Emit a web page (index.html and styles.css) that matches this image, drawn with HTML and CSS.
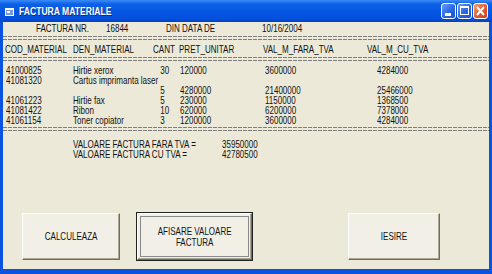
FILE: index.html
```html
<!DOCTYPE html>
<html lang="ro">
<head>
  <meta charset="UTF-8">
  <title>FACTURA MATERIALE</title>
  <link rel="stylesheet" href="styles.css">
</head>
<body>
  <div class="window">
    <div class="titlebar">
      <svg class="app-icon" width="9" height="8" viewBox="0 0 9 8">
        <rect x="0" y="0" width="9" height="8" fill="#fff"/>
        <rect x="1" y="2" width="7" height="5" fill="#7a96df"/>
        <rect x="2" y="3" width="3" height="2" fill="#fff"/>
      </svg>
      <span class="title">FACTURA MATERIALE</span>
      <div class="controls">
        <span class="ctl">
          <svg width="15" height="16" viewBox="0 0 15 16"><rect x="4" y="10" width="6" height="3" fill="#fff"/></svg>
        </span>
        <span class="ctl">
          <svg width="15" height="16" viewBox="0 0 15 16"><rect x="3.5" y="3.5" width="8" height="8" fill="none" stroke="#fff" stroke-width="1"/><rect x="3" y="3" width="9" height="2" fill="#fff"/></svg>
        </span>
        <span class="ctl close">
          <svg width="15" height="16" viewBox="0 0 15 16"><path d="M4 4 L11 12 M11 4 L4 12" stroke="#fff" stroke-width="2"/></svg>
        </span>
      </div>
    </div>

    <div class="client">
      <div class="info-row">
        <span>FACTURA NR.</span>
        <span>16844</span>
        <span>DIN DATA DE</span>
        <span>10/16/2004</span>
      </div>

      <div class="rule"></div>

      <div class="grid head">
        <span>COD_MATERIAL</span>
        <span>DEN_MATERIAL</span>
        <span>CANT</span>
        <span>PRET_UNITAR</span>
        <span>VAL_M_FARA_TVA</span>
        <span>VAL_M_CU_TVA</span>
      </div>

      <div class="rule"></div>

      <div class="grid rows">
        <span>41000825</span><span>Hirtie xerox</span><span class="qty">30</span><span>120000</span><span>3600000</span><span>4284000</span>
        <span>41081320</span><span class="wide">Cartus imprimanta laser</span>
        <span></span><span></span><span class="qty">5</span><span>4280000</span><span>21400000</span><span>25466000</span>
        <span>41061223</span><span>Hirtie fax</span><span class="qty">5</span><span>230000</span><span>1150000</span><span>1368500</span>
        <span>41081422</span><span>Ribon</span><span class="qty">10</span><span>620000</span><span>6200000</span><span>7378000</span>
        <span>41061154</span><span>Toner copiator</span><span class="qty">3</span><span>1200000</span><span>3600000</span><span>4284000</span>
      </div>

      <div class="rule"></div>

      <div class="totals">
        <span>VALOARE FACTURA FARA TVA =</span><span>35950000</span>
        <span>VALOARE FACTURA CU TVA =</span><span>42780500</span>
      </div>

      <div class="actions">
        <button class="btn btn-calc"><b class="label">CALCULEAZA</b></button>
        <button class="btn btn-show focused"><div class="focus-rect"><b class="label">AFISARE VALOARE<br>FACTURA</b></div></button>
        <button class="btn btn-exit"><b class="label">IESIRE</b></button>
      </div>
    </div>
  </div>
</body>
</html>
```

FILE: styles.css
```css
body {
  margin: 0;
  padding: 0;
  background: #fff;
  font-family: "Liberation Sans", Arial, sans-serif;
}

.window {
  width: 492px;
  height: 274px;
  box-sizing: border-box;
  background: #0a52e0;
  display: flex;
  flex-direction: column;
}

/* title bar */
.titlebar {
  height: 22px;
  flex: none;
  display: flex;
  align-items: center;
  padding: 0 4px 0 5px;
  background: linear-gradient(180deg, #3b8cf7 0%, #0c62e6 18%, #0456e2 50%, #0350dc 85%, #0341c4 100%);
}

.app-icon {
  flex: none;
  margin-top: 1px;
}

.title {
  margin-left: 5px;
  color: #fff;
  font-weight: bold;
  font-size: 11px;
  white-space: nowrap;
  text-shadow: 1px 1px 0 #0a2a8a;
  transform: scaleX(0.78);
  transform-origin: left center;
}

.controls {
  margin-left: auto;
  display: flex;
  gap: 1px;
}

.ctl {
  width: 15px;
  height: 16px;
  box-sizing: border-box;
  border: 1px solid #fff;
  border-radius: 3px;
  background: linear-gradient(135deg, #6a9cf5 0%, #2a66e8 55%, #1c4fd0 100%);
  display: block;
  overflow: hidden;
}

.ctl svg {
  display: block;
  margin: -1px;
}

.ctl.close {
  background: linear-gradient(135deg, #f0a07a 0%, #e25a2c 55%, #c8401c 100%);
}

/* client area */
.client {
  flex: 1;
  margin: 0 3px 5px 3px;
  background: #ece9d8;
  padding-left: 3px;
  font-size: 11px;
  color: #111;
  display: flex;
  flex-direction: column;
}

/* the form font is a narrow one: squeeze each text */
.client span {
  white-space: nowrap;
  transform: scaleX(0.73);
  transform-origin: left center;
}

.info-row {
  display: grid;
  grid-template-columns: 70px 60px 96px auto;
  padding-left: 30px;
  line-height: 12px;
}

.rule {
  height: 4px;
  margin: 2px 0 0 -3px;
  background:
    repeating-linear-gradient(90deg, #7d7d7d 0 4px, transparent 4px 5px) top / 100% 1px no-repeat,
    repeating-linear-gradient(90deg, #7d7d7d 0 4px, transparent 4px 5px) bottom / 100% 1px no-repeat;
}

.grid {
  display: grid;
}

.head {
  grid-template-columns: 68px 80px 26px 84px 104px auto;
  line-height: 12px;
  margin-top: 3px;
  margin-left: -1px;
}

.rows {
  grid-template-columns: 67px 80px 27px 85px 112px auto;
  line-height: 10px;
  margin-top: 4px;
}

.client .rows .qty {
  text-align: right;
  padding-right: 23px;
  transform-origin: right center;
}

.rows .wide {
  grid-column: 2 / 7;
}

.totals {
  display: grid;
  grid-template-columns: 149px auto;
  padding-left: 67px;
  line-height: 10px;
  margin-top: 8px;
}

/* buttons */
.actions {
  display: flex;
  margin-top: 54px;
  padding-left: 16px;
}

.btn {
  height: 47px;
  padding: 0;
  font-family: inherit;
  font-size: 11px;
  color: #111;
  background: #f1efe6;
  border: 1px solid;
  border-color: #fdfdfb #6f6c62 #6f6c62 #fdfdfb;
  box-shadow: inset -1px -1px 0 #a9a694;
  line-height: 11px;
}

.label {
  display: inline-block;
  font-weight: normal;
  white-space: nowrap;
  transform: scaleX(0.73);
}

.btn-calc {
  width: 98px;
}

.btn-show {
  width: 115px;
  margin-left: 17px;
}

.btn-exit {
  width: 92px;
  margin-left: 96px;
}

.focused {
  outline: 1px solid #222;
  padding: 2px;
}

.focus-rect {
  display: flex;
  align-items: center;
  justify-content: center;
  height: 100%;
  box-sizing: border-box;
  border: 1px solid #8a8a8a;
}
```
